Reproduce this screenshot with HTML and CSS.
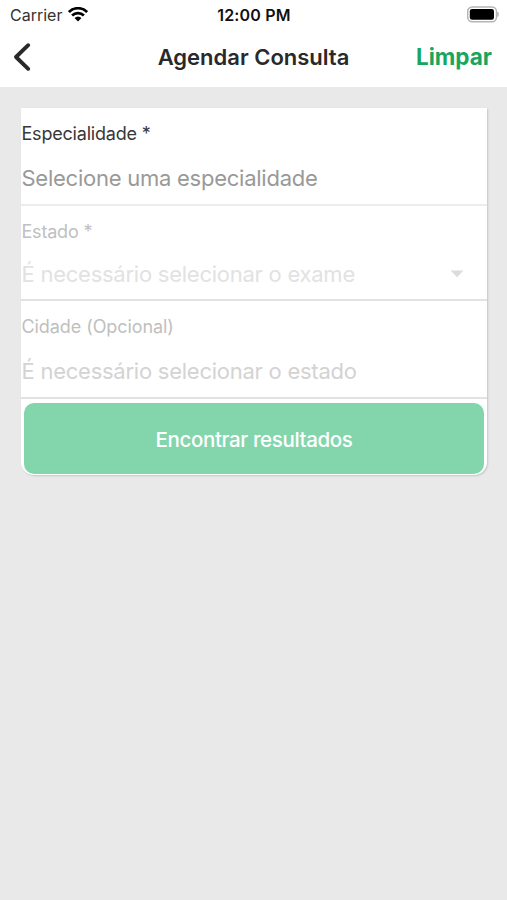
FILE: index.html
```html
<!DOCTYPE html>
<html lang="pt-BR">
<head>
<meta charset="utf-8">
<title>Agendar Consulta</title>
<link rel="stylesheet" href="styles.css">
</head>
<body>
<header class="header">
  <div class="status">
    <div class="network">
      <span class="carrier">Carrier</span>
      <svg class="wifi" width="20" height="15" viewBox="0 0 20 15" fill="none" stroke="#000" stroke-width="2.700"><path d="M.9 5.1C6-.1 14-.1 19.100 5.100M4.100 8.500C7.400 5.200 12.600 5.200 15.900 8.500"/><path d="M6.500 11.100Q10 8.100 13.500 11.100L10 14.500Z" fill="#000" stroke="none"/></svg>
    </div>
    <span class="clock">12:00 PM</span>
    <svg class="battery" width="32" height="18" viewBox="0 0 32 18"><rect x="0.700" y="1" width="28.800" height="14.800" rx="4.500" fill="#fff" stroke="#b5b5b5" stroke-width="1.500"/><rect x="2.800" y="3" width="24.200" height="10.800" rx="2.200" fill="#000"/><path d="M30.800 6q1.200 2.300 0 4.600z" fill="#999" stroke="#999" stroke-width=".5"/></svg>
  </div>
  <nav class="nav">
    <svg class="back" width="20" height="30" viewBox="0 0 20 30" fill="none" stroke="#29292b" stroke-width="3.900" stroke-linecap="round" stroke-linejoin="round"><path d="M16.200 3.200 4 15 16.200 26.800"/></svg>
    <h1 class="title">Agendar Consulta</h1>
    <span class="clear">Limpar</span>
  </nav>
</header>
<main class="card">
  <section class="field specialty">
    <div class="label"><span>Especialidade *</span></div>
    <div class="value"><span>Selecione uma especialidade</span></div>
  </section>
  <section class="field state">
    <div class="label"><span>Estado *</span></div>
    <div class="value"><span>É necessário selecionar o exame</span>
      <svg class="caret" width="14" height="8" viewBox="0 0 14 8"><path d="M.5 .5H13.500L7 7.300Z" fill="#dcdcdc"/></svg>
    </div>
  </section>
  <section class="field city">
    <div class="label"><span>Cidade (Opcional)</span></div>
    <div class="value"><span>É necessário selecionar o estado</span></div>
  </section>
  <button class="submit"><span>Encontrar resultados</span></button>
</main>
</body>
</html>
```
FILE: styles.css
```css
* { box-sizing: border-box; }
body { margin: 0; min-height: 900px; background: #e9e9e9; font-family: Inter, "Liberation Sans", sans-serif; }
svg { display: block; flex: none; }
.header { height: 87px; background: #fff; }
.status { display: grid; grid-template-columns: 1fr auto 1fr; align-items: center; height: 29px; padding: 0 8px 0 10px; }
.network { display: flex; align-items: center; gap: 6px; }
.carrier { font-size: 16px; color: #333; letter-spacing: 0; }
.clock { font-size: 16px; font-weight: 600; color: #111; letter-spacing: 0.2px; margin-right: 1px; }
.battery { justify-self: end; }
.nav { display: grid; grid-template-columns: 1fr auto 1fr; align-items: center; height: 56px; padding: 0 15px 0 12px; }
.title { margin: 0 0 0 3px; font-size: 22px; font-weight: 600; color: #29292b; }
.clear { justify-self: end; margin-bottom: 1px; font-size: 22.5px; font-weight: 700; color: #18a65f; }
.card { width: 466px; height: 367px; margin: 21px 0 0 21px; background: #fff; border-radius: 0 0 13px 13px; box-shadow: 1px 1px 2px rgba(0,0,0,.15); }
.field { display: flex; flex-direction: column; padding-left: 0.5px; }
.label { display: flex; align-items: center; height: 30px; font-size: 18px; letter-spacing: -0.2px; color: #c0c0c0; }
.value { display: flex; align-items: center; justify-content: space-between; height: 30px; padding-right: 23px; font-size: 22px; letter-spacing: -0.25px; }
.specialty { height: 98px; padding-top: 10px; gap: 15px; border-bottom: 2px solid #ececec; }
.specialty .label { color: #383838; }
.specialty .value { color: #999; }
.state { height: 95px; padding-top: 10px; gap: 13px; border-bottom: 2px solid #e2e2e2; }
.state .value { color: #e2e2e2; }
.city { height: 98px; padding-top: 10px; gap: 15px; border-bottom: 2px solid #e2e2e2; }
.city .label { letter-spacing: -0.08px; }
.city .value { color: #d3d3d3; }
.submit { display: flex; align-items: center; justify-content: center; width: 460px; height: 71px; margin: 4px 3px 0; padding: 1px 0 0; border: 0; border-radius: 10px; background: #83d6ac; color: #fff; font: 500 20.5px Inter, sans-serif; letter-spacing: -0.37px; }
```
